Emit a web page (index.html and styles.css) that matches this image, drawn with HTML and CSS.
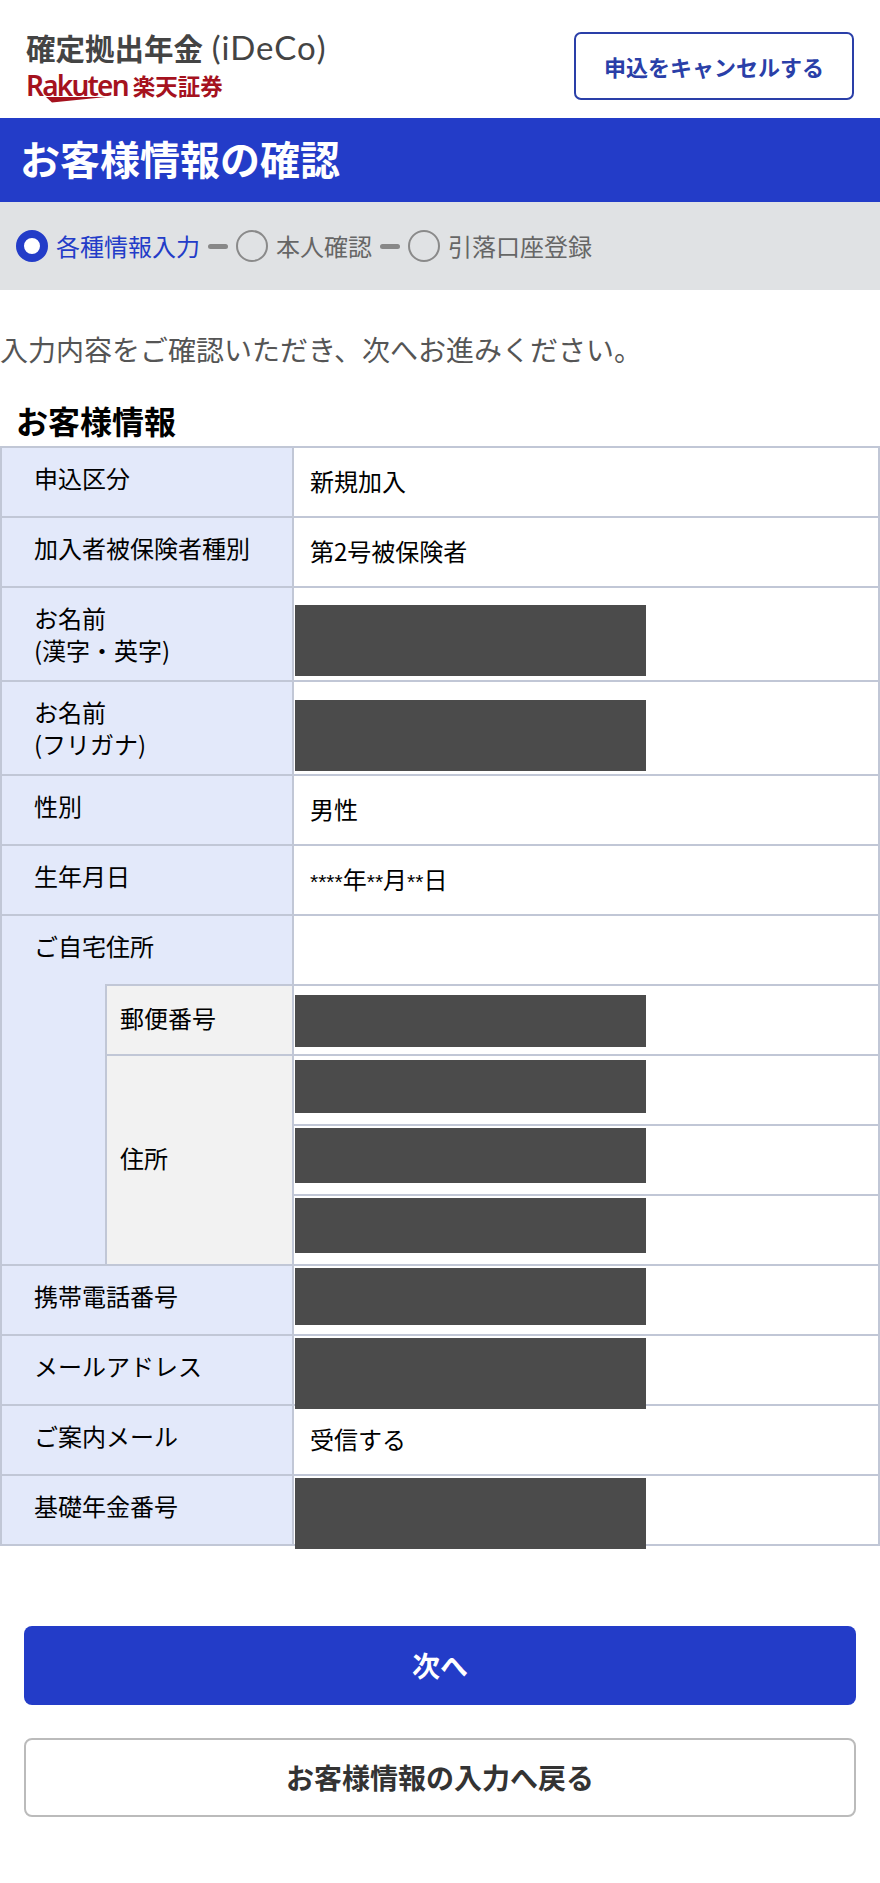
FILE: index.html
```html
<!doctype html>
<html lang="ja">
<head>
  <meta charset="UTF-8"/>
  <meta content="width=device-width, initial-scale=1" name="viewport">
  <title>お客様情報の確認</title>
  <link rel="stylesheet" href="styles.css">
</head>
<body>
<header class="site-header">
  <div class="brand">
    <div class="brand-title">確定拠出年金 <span class="brand-latin">(iDeCo)</span></div>
    <div class="brand-logo">
      <div class="logo-word">Rakuten
        <svg class="logo-swoosh" viewBox="0 0 60 6" aria-hidden="true">
          <path d="M0 0 L60 0 L6 5.5 Z"/>
        </svg>
      </div>
      <span class="logo-jp">楽天証券</span>
    </div>
  </div>
  <a class="btn-cancel">申込をキャンセルする</a>
</header>

<h1 class="page-title">お客様情報の確認</h1>

<ol class="steps">
  <li class="step is-current"><span class="step-dot"></span>各種情報入力</li>
  <li class="step-sep"></li>
  <li class="step"><span class="step-dot"></span>本人確認</li>
  <li class="step-sep"></li>
  <li class="step"><span class="step-dot"></span>引落口座登録</li>
</ol>

<p class="lead">入力内容をご確認いただき、次へお進みください。</p>

<h2 class="section-title">お客様情報</h2>

<table class="info">
  <colgroup>
    <col class="col-strip">
    <col class="col-label">
    <col>
  </colgroup>
  <tr>
    <th colspan="2">申込区分</th>
    <td>新規加入</td>
  </tr>
  <tr>
    <th colspan="2">加入者被保険者種別</th>
    <td>第2号被保険者</td>
  </tr>
  <tr class="tall">
    <th colspan="2">お名前<br>(漢字・英字)</th>
    <td><span class="redact r-name1"></span></td>
  </tr>
  <tr class="tall">
    <th colspan="2">お名前<br>(フリガナ)</th>
    <td><span class="redact r-name2"></span></td>
  </tr>
  <tr>
    <th colspan="2">性別</th>
    <td>男性</td>
  </tr>
  <tr>
    <th colspan="2">生年月日</th>
    <td><span class="stars">****</span>年<span class="stars">**</span>月<span class="stars">**</span>日</td>
  </tr>
  <tr>
    <th colspan="2" class="no-bottom">ご自宅住所</th>
    <td></td>
  </tr>
  <tr>
    <th rowspan="4" class="strip"></th>
    <th class="sub">郵便番号</th>
    <td><span class="redact r-zip"></span></td>
  </tr>
  <tr>
    <th rowspan="3" class="sub">住所</th>
    <td><span class="redact r-addr1"></span></td>
  </tr>
  <tr>
    <td><span class="redact r-addr2"></span></td>
  </tr>
  <tr>
    <td><span class="redact r-addr2"></span></td>
  </tr>
  <tr>
    <th colspan="2">携帯電話番号</th>
    <td><span class="redact r-tel"></span></td>
  </tr>
  <tr>
    <th colspan="2">メールアドレス</th>
    <td><span class="redact r-long"></span></td>
  </tr>
  <tr>
    <th colspan="2">ご案内メール</th>
    <td>受信する</td>
  </tr>
  <tr>
    <th colspan="2">基礎年金番号</th>
    <td><span class="redact r-long"></span></td>
  </tr>
</table>

<div class="actions">
  <a class="btn btn-primary">次へ</a>
  <a class="btn btn-back">お客様情報の入力へ戻る</a>
</div>
</body>
</html>
```

FILE: styles.css
```css
*, *:before {
  box-sizing: border-box;
}

body {
  margin: 0;
  background: #fff;
  color: #000;
  font-family: "Noto Sans CJK JP", "Noto Sans", sans-serif;
  font-size: 24px;
}

/* header */
.site-header {
  display: flex;
  justify-content: space-between;
  align-items: flex-start;
  height: 118px;
  padding: 32px 26px 0 26px;
}

.brand-title {
  color: #444;
  font-size: 29.5px;
  font-weight: 700;
  line-height: 30px;
}

.brand-latin {
  margin-left: 2px;
  font-family: "Lato", sans-serif;
  font-size: 33px;
  font-weight: 400;
  letter-spacing: 1px;
}

.brand-logo {
  display: flex;
  gap: 5px;
  margin-top: 11px;
  color: #a5121e;
}

.logo-word {
  position: relative;
  font-family: "Noto Sans", sans-serif;
  font-size: 28px;
  font-weight: 600;
  letter-spacing: -1.8px;
  line-height: 24px;
}

.logo-swoosh {
  position: absolute;
  left: 20px;
  top: 24px;
  width: 60px;
  height: 6px;
  fill: #a5121e;
}

.logo-jp {
  font-size: 22.5px;
  font-weight: 700;
  line-height: 24px;
}

.btn-cancel {
  display: flex;
  justify-content: center;
  align-items: center;
  width: 280px;
  height: 68px;
  border: 2px solid #2a3fa8;
  border-radius: 7px;
  color: #2a3fa8;
  font-family: "Liberation Serif", "Noto Sans CJK JP", serif;
  font-size: 22px;
  font-weight: 700;
}

/* title bar */
.page-title {
  margin: 0;
  height: 84px;
  padding-left: 20px;
  background: #233cc8;
  color: #fff;
  font-size: 40px;
  font-weight: 700;
  line-height: 80px;
}

/* steps */
.steps {
  display: flex;
  align-items: center;
  height: 88px;
  margin: 0;
  padding: 0 0 0 16px;
  list-style: none;
  background: #e0e2e4;
  color: #666;
  line-height: 32px;
}

.step {
  display: flex;
  align-items: center;
  gap: 8px;
}

.step-dot {
  width: 32px;
  height: 32px;
  border: 2px solid #8a8a8a;
  border-radius: 50%;
}

.step.is-current {
  color: #233cc8;
}

.is-current .step-dot {
  border: 8px solid #233cc8;
  background: #fff;
}

.step-sep {
  width: 20px;
  height: 5px;
  margin: 0 8px;
  border-radius: 3px;
  background: #888;
}

.lead {
  margin: 0;
  padding-top: 41px;
  color: #555;
  font-size: 28px;
  line-height: 36px;
}

.section-title {
  margin: 0;
  padding: 32px 0 0 16px;
  font-size: 32px;
  font-weight: 700;
  line-height: 42px;
}

/* table */
.info {
  width: 880px;
  margin-top: 5px;
  border-collapse: collapse;
  table-layout: fixed;
}

.col-strip {
  width: 105px;
}

.col-label {
  width: 187px;
}

.info tr {
  height: 70px;
}

.info tr.tall {
  height: 94px;
}

.info th,
.info td {
  border: 2px solid #c1c7d6;
  text-align: left;
  vertical-align: top;
  font-weight: 400;
  line-height: 32px;
}

.info th {
  padding: 14px 0 0 32px;
  background: #e3e9fa;
}

.info td {
  position: relative;
  padding: 17px 0 0 16px;
}

.stars {
  font-family: "Liberation Sans", sans-serif;
  font-size: 21px;
}

.info th.no-bottom {
  border-bottom: 0;
}

.info th.strip {
  border-top: 0;
  border-right: 2px solid #c1c7d6;
  padding: 0;
}

.info th.sub {
  padding: 0 0 4px 13px;
  background: #f2f2f2;
  vertical-align: middle;
}

/* blacked out values */
.redact {
  position: absolute;
  left: 1px;
  width: 351px;
  background: #4b4b4b;
}

.r-name1 { top: 17px; height: 71px; }
.r-name2 { top: 18px; height: 71px; }
.r-zip { top: 9px; height: 52px; }
.r-addr1 { top: 4px; height: 53px; }
.r-addr2 { top: 2px; height: 55px; }
.r-tel { top: 2px; height: 57px; }
.r-long { top: 2px; height: 71px; }

/* bottom buttons */
.actions {
  display: flex;
  flex-direction: column;
  gap: 33px;
  padding: 80px 24px 66px;
}

.btn {
  display: flex;
  justify-content: center;
  align-items: center;
  height: 79px;
  padding-bottom: 2px;
  border-radius: 8px;
  font-family: "Liberation Serif", "Noto Sans CJK JP", serif;
  font-size: 28px;
  font-weight: 700;
}

.btn-primary {
  background: #233cc8;
  color: #fff;
}

.btn-back {
  border: 2px solid #bbb;
  color: #333;
}
```
